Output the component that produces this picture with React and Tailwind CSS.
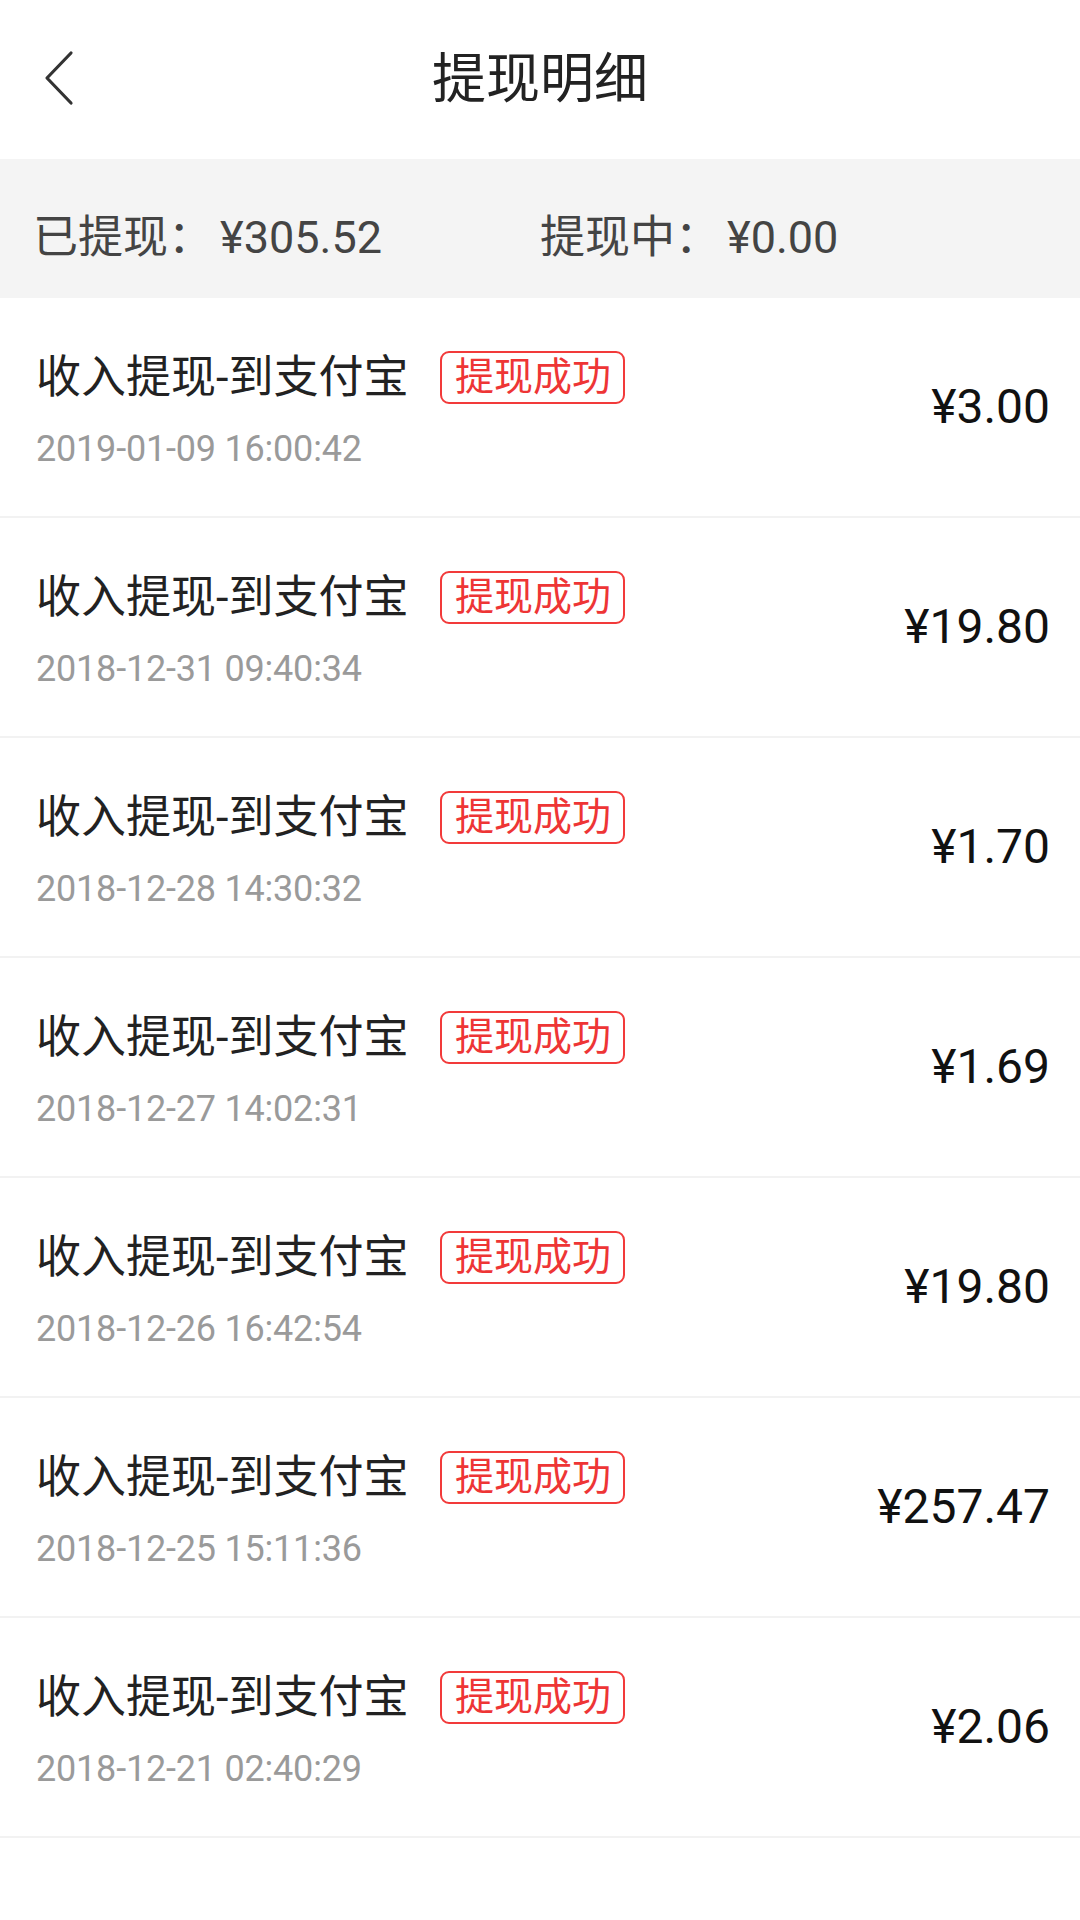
const RECORDS = [
  { time: '2019-01-09 16:00:42', amount: '¥3.00' },
  { time: '2018-12-31 09:40:34', amount: '¥19.80' },
  { time: '2018-12-28 14:30:32', amount: '¥1.70' },
  { time: '2018-12-27 14:02:31', amount: '¥1.69' },
  { time: '2018-12-26 16:42:54', amount: '¥19.80' },
  { time: '2018-12-25 15:11:36', amount: '¥257.47' },
  { time: '2018-12-21 02:40:29', amount: '¥2.06' }
]

function BackIcon() {
  return (
    <svg width="30" height="56" viewBox="0 0 30 56" fill="none">
      <polyline points="27,3 3,28 27,53" stroke="#333" strokeWidth="3.2" strokeLinecap="round" strokeLinejoin="round" />
    </svg>
  )
}

function RecordRow({ time, amount }) {
  return (
    <div className="h-[220px] flex items-center justify-between pl-[36px] pr-[30px] border-b-2 border-[#f2f2f2]">
      <div className="flex flex-col pt-[3px]">
        <div className="flex items-center">
          <span className="text-[45px] leading-[53px] text-[#222]">收入提现-到支付宝</span>
          <span className="ml-[32px] h-[53px] w-[185px] flex items-center justify-center rounded-[9px] border-2 border-[#f23a3a] text-[39px] leading-none text-[#ee3535]">
            提现成功
          </span>
        </div>
        <div className="mt-[27px] text-[36px] leading-[36px] tracking-[-0.2px] text-[#9a9a9a]">{time}</div>
      </div>
      <div className="text-[48px] leading-none text-[#111]">{amount}</div>
    </div>
  )
}

export default function App() {
  return (
    <div className="w-[1080px] min-h-[1920px] bg-white" style={{ fontFamily: 'Roboto, "Noto Sans CJK SC", sans-serif' }}>
      {/* Header */}
      <div className="relative h-[159px] flex items-center justify-center">
        <div className="absolute left-[44px] top-[50px]">
          <BackIcon />
        </div>
        <h1 className="text-[54px] leading-none text-[#222]">提现明细</h1>
      </div>

      {/* Summary */}
      <div className="h-[139px] bg-[#f4f4f4] flex items-center px-[33px] pt-[18px] text-[45px] leading-none text-[#444]">
        <div className="flex-1">
          已提现：<span className="ml-[7px]">¥305.52</span>
        </div>
        <div className="flex-1">
          提现中：<span className="ml-[7px]">¥0.00</span>
        </div>
      </div>

      {/* List */}
      <div>
        {RECORDS.map((r, i) => (
          <RecordRow key={i} time={r.time} amount={r.amount} />
        ))}
      </div>
    </div>
  )
}
